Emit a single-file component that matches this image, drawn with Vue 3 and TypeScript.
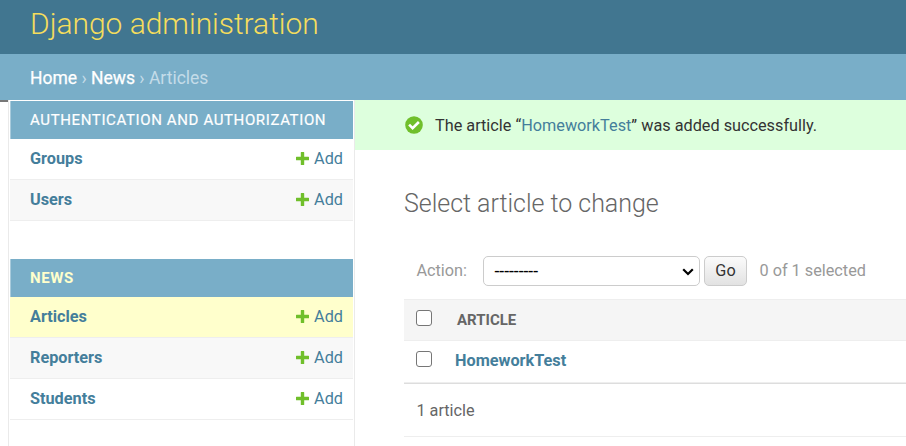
<script setup lang="ts">
import { ref } from 'vue'

interface Model {
  name: string
  current?: boolean
}
interface AppGroup {
  label: string
  current?: boolean
  models: Model[]
}

const apps: AppGroup[] = [
  { label: 'Authentication and Authorization', models: [{ name: 'Groups' }, { name: 'Users' }] },
  {
    label: 'News',
    current: true,
    models: [{ name: 'Articles', current: true }, { name: 'Reporters' }, { name: 'Students' }],
  },
]
const articles = ['HomeworkTest']
const picked = ref<string[]>([])

function toggleAll(event: Event) {
  picked.value = (event.target as HTMLInputElement).checked ? [...articles] : []
}
</script>

<template>
  <div class="page">
    <header class="header">
      <a class="brand">Django administration</a>
    </header>
    <nav class="breadcrumbs">
      <a>Home</a> › <a>News</a> › Articles
    </nav>
    <div class="main">
      <div class="gutter"></div>
      <aside class="sidebar">
        <section v-for="app in apps" :key="app.label" class="module">
          <h2 class="caption" :class="{ current: app.current }">{{ app.label }}</h2>
          <div v-for="model in app.models" :key="model.name" class="model" :class="{ current: model.current }">
            <a class="model-name">{{ model.name }}</a>
            <a class="add">
              <svg class="plus" viewBox="0 0 13 13"><path d="M5.300 0h2.400q.5 0 .5.500v4.300h4.300q.5 0 .5.500v2.400q0 .5-.5.500H8.200v4.300q0 .5-.5.500H5.300q-.5 0-.5-.5V8.200H.5q-.5 0-.5-.5V5.300q0-.5.5-.5h4.300V.5q0-.5.5-.5z" /></svg>
              <span>Add</span>
            </a>
          </div>
        </section>
      </aside>
      <main class="content">
        <div class="message">
          <svg class="check" viewBox="0 0 18 18">
            <circle cx="9" cy="9" r="8.8" />
            <path d="M4.1 8.700l3.500 3.500 6.300-6.200" />
          </svg>
          <p>The article “<a>HomeworkTest</a>” was added successfully.</p>
        </div>
        <div class="changelist">
          <h1>Select article to change</h1>
          <div class="actions">
            <label for="action">Action:</label>
            <div class="select-box">
              <select id="action"><option>---------</option></select>
              <svg class="chevron" viewBox="0 0 12 8"><path d="M1.2 1.3L6 6l4.800-4.700" /></svg>
            </div>
            <button type="button">Go</button>
            <span class="counter">{{ picked.length }} of {{ articles.length }} selected</span>
          </div>
          <div class="row head">
            <input type="checkbox" :checked="picked.length === articles.length" @change="toggleAll" />
            <span class="column">Article</span>
          </div>
          <div v-for="article in articles" :key="article" class="row">
            <input v-model="picked" type="checkbox" :value="article" />
            <a class="title">{{ article }}</a>
          </div>
          <p class="paginator">{{ articles.length }} article</p>
        </div>
      </main>
    </div>
  </div>
</template>

<style>
body {
  margin: 0;
  background: #fff;
}
</style>

<style scoped>
.page {
  height: 446px;
  overflow: hidden;
  display: flex;
  flex-direction: column;
  font-family: Roboto, "Liberation Sans", sans-serif;
  font-size: 16.25px;
  color: #333;
}
.page * {
  box-sizing: border-box;
}
.header {
  height: 54px;
  flex: none;
  padding-left: 30px;
  background: #417690;
}
.brand {
  color: #f5dd5d;
  font-size: 30px;
  font-weight: 300;
  letter-spacing: -0.03px;
  line-height: 48px;
}
.breadcrumbs {
  height: 46px;
  flex: none;
  padding-left: 30px;
  background: #79aec8;
  color: #c4dce8;
  font-size: 17.5px;
  line-height: 48px;
}
.breadcrumbs a {
  color: #fff;
  font-weight: 400;
  -webkit-text-stroke: 0.25px #fff;
}
.main {
  flex: 1;
  display: flex;
}
.gutter {
  width: 8px;
  border-top: 2px solid #777;
}
.sidebar {
  width: 347px;
  flex: none;
  padding: 1px 1px 0;
  border-left: 1px solid #eaeaea;
  border-right: 1px solid #eaeaea;
}
.module {
  margin-bottom: 38px;
}
.caption {
  height: 38px;
  margin: 0;
  padding-left: 19px;
  border-left: 1px solid #a9cbdc;
  background: #79aec8;
  color: #fff;
  font-size: 15px;
  font-weight: 400;
  letter-spacing: 0.625px;
  line-height: 38px;
  text-transform: uppercase;
  -webkit-text-stroke: 0.2px #fff;
}
.caption.current {
  color: #ffc;
  font-weight: 700;
  -webkit-text-stroke: 0;
}
.model {
  height: 41px;
  display: flex;
  justify-content: space-between;
  padding: 0 10px 0 20px;
  border-bottom: 1px solid #eee;
  color: #447e9b;
  line-height: 39px;
}
.model:nth-child(odd) {
  background: #f8f8f8;
}
.model:last-child:nth-child(even) {
  background: #fff;
}
.model.current {
  background: #ffc;
}
.model-name {
  font-weight: 700;
}
.add {
  height: 39px;
  display: flex;
  align-items: center;
  gap: 5px;
}
.plus {
  width: 13px;
  height: 13px;
  fill: #70bf2b;
}
.content {
  flex: 1;
  min-width: 0;
}
.message {
  height: 50px;
  display: flex;
  align-items: center;
  gap: 12px;
  padding-left: 50px;
  background: #dfd;
}
.message a,
.title {
  color: #447e9b;
}
.message p {
  margin: 0;
}
.check {
  width: 18px;
  height: 18px;
  fill: #70bf2b;
}
.check path {
  fill: none;
  stroke: #fff;
  stroke-width: 2.6;
}
.changelist {
  padding: 35px 0 0 49px;
}
h1 {
  margin: 0;
  color: #666;
  font-size: 25px;
  font-weight: 300;
  letter-spacing: -0.03px;
  line-height: 38px;
}
.actions {
  height: 30px;
  display: flex;
  align-items: center;
  margin: 33px 0 13px;
  padding-left: 12.4px;
  color: #999;
}
.actions label {
  width: 66.6px;
}
.actions label,
.counter {
  height: 30px;
  line-height: 29px;
}
.select-box {
  position: relative;
  width: 217px;
  height: 30px;
}
select {
  appearance: none;
  width: 100%;
  height: 100%;
  padding: 0 10.5px;
  border: 1px solid #ccc;
  border-radius: 5px;
  background: #fff;
  color: #000;
  font-family: inherit;
  font-size: 17.5px;
}
.chevron {
  position: absolute;
  right: 6px;
  top: 12px;
  width: 12px;
  height: 8px;
  fill: none;
  stroke: #000;
  stroke-width: 2.2;
}
button {
  width: 43px;
  height: 30px;
  margin: 0 12.5px 0 4px;
  padding: 0 0 2px;
  border: 1px solid #ccc;
  border-radius: 5px;
  background: linear-gradient(#fbfbfb, #e2e2e2);
  color: #333;
  font-family: inherit;
  font-size: 16.25px;
}
.row {
  height: 42px;
  display: flex;
  align-items: flex-start;
  padding: 10px 0 0 12px;
  border-bottom: 1px solid #eee;
}
.row.head {
  border-top: 1px solid #eee;
  background: #f5f5f5;
}
.row input {
  appearance: none;
  width: 16px;
  height: 16px;
  margin: 0 23px 0 0;
  border: 1px solid #767676;
  border-radius: 3px;
  background: #fff;
}
.row input:checked {
  background: #447e9b;
}
.column {
  margin-left: 2px;
  color: #666;
  font-size: 15px;
  font-weight: 700;
  line-height: 20px;
  text-transform: uppercase;
}
.title {
  font-weight: 700;
  line-height: 20px;
}
.paginator {
  height: 54px;
  margin: 0;
  padding-left: 12.4px;
  border-top: 1px solid #ddd;
  border-bottom: 1px solid #eee;
  color: #666;
  line-height: 53px;
}
</style>
